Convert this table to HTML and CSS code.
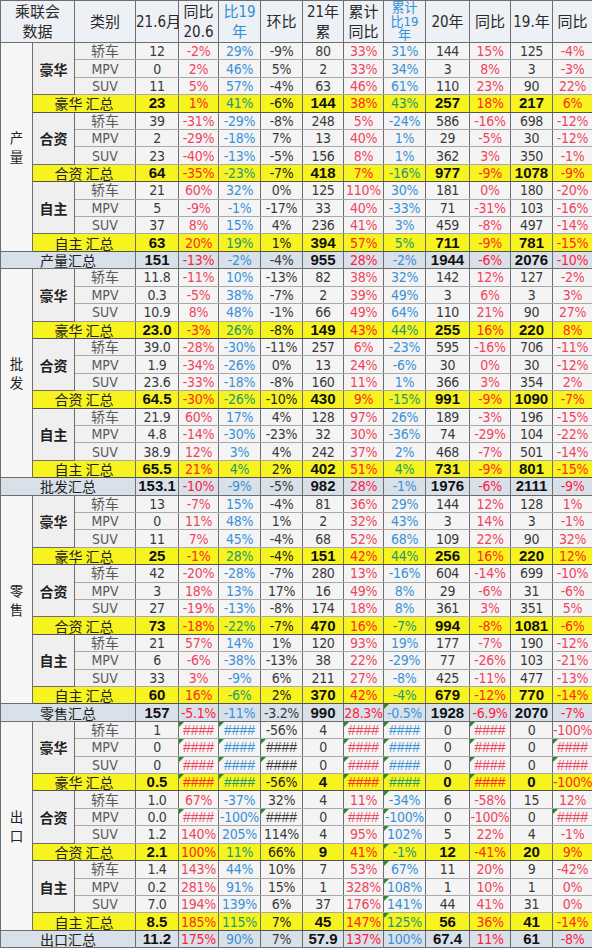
FILE: index.html
```html
<!DOCTYPE html>
<html lang="zh">
<head>
<meta charset="utf-8">
<title>乘联会数据</title>
<link rel="stylesheet" href="styles.css">
</head>
<body>
<table class="sheet">
<colgroup>
<col class="c-a"><col class="c-b"><col class="c-c"><col class="c-d"><col class="c-e"><col class="c-f"><col class="c-g"><col class="c-h"><col class="c-i"><col class="c-j"><col class="c-k"><col class="c-l"><col class="c-m"><col class="c-n">
</colgroup>
<thead>
<tr class="hd">
<th colspan="2">乘联会<br>数据</th><th>类别</th><th>21.6月</th><th>同比<br>20.6</th><th class="hb">比19<br>年</th><th>环比</th><th>21年<br>累</th><th>累计<br>同比</th><th class="hb"><div class="three">累计<br>比19<br>年</div></th><th>20年</th><th>同比</th><th>19.年</th><th>同比</th>
</tr>
</thead>
<tbody>
<!-- 产量 -->
<tr><td class="sec" rowspan="12">产<br>量</td><td class="sub" rowspan="3">豪华</td><td class="typ">轿车</td><td>12</td><td>-2%</td><td>29%</td><td>-9%</td><td>80</td><td>33%</td><td>31%</td><td>144</td><td>15%</td><td>125</td><td>-4%</td></tr>
<tr><td class="typ">MPV</td><td>0</td><td>2%</td><td>46%</td><td>5%</td><td>2</td><td>33%</td><td>34%</td><td>3</td><td>8%</td><td>3</td><td>-3%</td></tr>
<tr><td class="typ">SUV</td><td>11</td><td>5%</td><td>57%</td><td>-4%</td><td>63</td><td>46%</td><td>61%</td><td>110</td><td>23%</td><td>90</td><td>22%</td></tr>
<tr class="st"><td class="lbl" colspan="2">豪华 汇总</td><td>23</td><td>1%</td><td>41%</td><td>-6%</td><td>144</td><td>38%</td><td>43%</td><td>257</td><td>18%</td><td>217</td><td>6%</td></tr>
<tr><td class="sub" rowspan="3">合资</td><td class="typ">轿车</td><td>39</td><td>-31%</td><td>-29%</td><td>-8%</td><td>248</td><td>5%</td><td>-24%</td><td>586</td><td>-16%</td><td>698</td><td>-12%</td></tr>
<tr><td class="typ">MPV</td><td>2</td><td>-29%</td><td>-18%</td><td>7%</td><td>13</td><td>40%</td><td>1%</td><td>29</td><td>-5%</td><td>30</td><td>-12%</td></tr>
<tr><td class="typ">SUV</td><td>23</td><td>-40%</td><td>-13%</td><td>-5%</td><td>156</td><td>8%</td><td>1%</td><td>362</td><td>3%</td><td>350</td><td>-1%</td></tr>
<tr class="st"><td class="lbl" colspan="2">合资 汇总</td><td>64</td><td>-35%</td><td>-23%</td><td>-7%</td><td>418</td><td>7%</td><td>-16%</td><td>977</td><td>-9%</td><td>1078</td><td>-9%</td></tr>
<tr><td class="sub" rowspan="3">自主</td><td class="typ">轿车</td><td>21</td><td>60%</td><td>32%</td><td>0%</td><td>125</td><td>110%</td><td>30%</td><td>181</td><td>0%</td><td>180</td><td>-20%</td></tr>
<tr><td class="typ">MPV</td><td>5</td><td>-9%</td><td>-1%</td><td>-17%</td><td>33</td><td>40%</td><td>-33%</td><td>71</td><td>-31%</td><td>103</td><td>-16%</td></tr>
<tr><td class="typ">SUV</td><td>37</td><td>8%</td><td>15%</td><td>4%</td><td>236</td><td>41%</td><td>3%</td><td>459</td><td>-8%</td><td>497</td><td>-14%</td></tr>
<tr class="st"><td class="lbl" colspan="2">自主 汇总</td><td>63</td><td>20%</td><td>19%</td><td>1%</td><td>394</td><td>57%</td><td>5%</td><td>711</td><td>-9%</td><td>781</td><td>-15%</td></tr>
<tr class="tot"><td class="lbl" colspan="3">产量汇总</td><td>151</td><td>-13%</td><td>-2%</td><td>-4%</td><td>955</td><td>28%</td><td>-2%</td><td>1944</td><td>-6%</td><td>2076</td><td>-10%</td></tr>
<!-- 批发 -->
<tr><td class="sec" rowspan="12">批<br>发</td><td class="sub" rowspan="3">豪华</td><td class="typ">轿车</td><td>11.8</td><td>-11%</td><td>10%</td><td>-13%</td><td>82</td><td>38%</td><td>32%</td><td>142</td><td>12%</td><td>127</td><td>-2%</td></tr>
<tr><td class="typ">MPV</td><td>0.3</td><td>-5%</td><td>38%</td><td>-7%</td><td>2</td><td>39%</td><td>49%</td><td>3</td><td>6%</td><td>3</td><td>3%</td></tr>
<tr><td class="typ">SUV</td><td>10.9</td><td>8%</td><td>48%</td><td>-1%</td><td>66</td><td>49%</td><td>64%</td><td>110</td><td>21%</td><td>90</td><td>27%</td></tr>
<tr class="st"><td class="lbl" colspan="2">豪华 汇总</td><td>23.0</td><td>-3%</td><td>26%</td><td>-8%</td><td>149</td><td>43%</td><td>44%</td><td>255</td><td>16%</td><td>220</td><td>8%</td></tr>
<tr><td class="sub" rowspan="3">合资</td><td class="typ">轿车</td><td>39.0</td><td>-28%</td><td>-30%</td><td>-11%</td><td>257</td><td>6%</td><td>-23%</td><td>595</td><td>-16%</td><td>706</td><td>-11%</td></tr>
<tr><td class="typ">MPV</td><td>1.9</td><td>-34%</td><td>-26%</td><td>0%</td><td>13</td><td>24%</td><td>-6%</td><td>30</td><td>0%</td><td>30</td><td>-12%</td></tr>
<tr><td class="typ">SUV</td><td>23.6</td><td>-33%</td><td>-18%</td><td>-8%</td><td>160</td><td>11%</td><td>1%</td><td>366</td><td>3%</td><td>354</td><td>2%</td></tr>
<tr class="st"><td class="lbl" colspan="2">合资 汇总</td><td>64.5</td><td>-30%</td><td>-26%</td><td>-10%</td><td>430</td><td>9%</td><td>-15%</td><td>991</td><td>-9%</td><td>1090</td><td>-7%</td></tr>
<tr><td class="sub" rowspan="3">自主</td><td class="typ">轿车</td><td>21.9</td><td>60%</td><td>17%</td><td>4%</td><td>128</td><td>97%</td><td>26%</td><td>189</td><td>-3%</td><td>196</td><td>-15%</td></tr>
<tr><td class="typ">MPV</td><td>4.8</td><td>-14%</td><td>-30%</td><td>-23%</td><td>32</td><td>30%</td><td>-36%</td><td>74</td><td>-29%</td><td>104</td><td>-22%</td></tr>
<tr><td class="typ">SUV</td><td>38.9</td><td>12%</td><td>3%</td><td>4%</td><td>242</td><td>37%</td><td>2%</td><td>468</td><td>-7%</td><td>501</td><td>-14%</td></tr>
<tr class="st"><td class="lbl" colspan="2">自主 汇总</td><td>65.5</td><td>21%</td><td>4%</td><td>2%</td><td>402</td><td>51%</td><td>4%</td><td>731</td><td>-9%</td><td>801</td><td>-15%</td></tr>
<tr class="tot"><td class="lbl" colspan="3">批发汇总</td><td>153.1</td><td>-10%</td><td>-9%</td><td>-5%</td><td>982</td><td>28%</td><td>-1%</td><td>1976</td><td>-6%</td><td>2111</td><td>-9%</td></tr>
<!-- 零售 -->
<tr><td class="sec" rowspan="12">零<br>售</td><td class="sub" rowspan="3">豪华</td><td class="typ">轿车</td><td>13</td><td>-7%</td><td>15%</td><td>-4%</td><td>81</td><td>36%</td><td>29%</td><td>144</td><td>12%</td><td>128</td><td>1%</td></tr>
<tr><td class="typ">MPV</td><td>0</td><td>11%</td><td>48%</td><td>1%</td><td>2</td><td>32%</td><td>43%</td><td>3</td><td>14%</td><td>3</td><td>-1%</td></tr>
<tr><td class="typ">SUV</td><td>11</td><td>7%</td><td>45%</td><td>-4%</td><td>68</td><td>52%</td><td>68%</td><td>109</td><td>22%</td><td>90</td><td>32%</td></tr>
<tr class="st"><td class="lbl" colspan="2">豪华 汇总</td><td>25</td><td>-1%</td><td>28%</td><td>-4%</td><td>151</td><td>42%</td><td>44%</td><td>256</td><td>16%</td><td>220</td><td>12%</td></tr>
<tr><td class="sub" rowspan="3">合资</td><td class="typ">轿车</td><td>42</td><td>-20%</td><td>-28%</td><td>-7%</td><td>280</td><td>13%</td><td>-16%</td><td>604</td><td>-14%</td><td>699</td><td>-10%</td></tr>
<tr><td class="typ">MPV</td><td>3</td><td>18%</td><td>13%</td><td>17%</td><td>16</td><td>49%</td><td>8%</td><td>29</td><td>-6%</td><td>31</td><td>-6%</td></tr>
<tr><td class="typ">SUV</td><td>27</td><td>-19%</td><td>-13%</td><td>-8%</td><td>174</td><td>18%</td><td>8%</td><td>361</td><td>3%</td><td>351</td><td>5%</td></tr>
<tr class="st"><td class="lbl" colspan="2">合资 汇总</td><td>73</td><td>-18%</td><td>-22%</td><td>-7%</td><td>470</td><td>16%</td><td>-7%</td><td>994</td><td>-8%</td><td>1081</td><td>-6%</td></tr>
<tr><td class="sub" rowspan="3">自主</td><td class="typ">轿车</td><td>21</td><td>57%</td><td>14%</td><td>1%</td><td>120</td><td>93%</td><td>19%</td><td>177</td><td>-7%</td><td>190</td><td>-12%</td></tr>
<tr><td class="typ">MPV</td><td>6</td><td>-6%</td><td>-38%</td><td>-13%</td><td>38</td><td>22%</td><td>-29%</td><td>77</td><td>-26%</td><td>103</td><td>-21%</td></tr>
<tr><td class="typ">SUV</td><td>33</td><td>3%</td><td>-9%</td><td>6%</td><td>211</td><td>27%</td><td>-8%</td><td>425</td><td>-11%</td><td>477</td><td>-13%</td></tr>
<tr class="st"><td class="lbl" colspan="2">自主 汇总</td><td>60</td><td>16%</td><td>-6%</td><td>2%</td><td>370</td><td>42%</td><td>-4%</td><td>679</td><td>-12%</td><td>770</td><td>-14%</td></tr>
<tr class="tot"><td class="lbl" colspan="3">零售汇总</td><td>157</td><td>-5.1%</td><td>-11%</td><td>-3.2%</td><td>990</td><td>28.3%</td><td class="g">-0.5%</td><td>1928</td><td>-6.9%</td><td>2070</td><td>-7%</td></tr>
<!-- 出口 -->
<tr><td class="sec" rowspan="12">出<br>口</td><td class="sub" rowspan="3">豪华</td><td class="typ">轿车</td><td>1</td><td class="g h">####</td><td class="g h">####</td><td>-56%</td><td>4</td><td class="g h">####</td><td class="g h">####</td><td>0</td><td class="g h">####</td><td>0</td><td>-100%</td></tr>
<tr><td class="typ">MPV</td><td>0</td><td class="g h">####</td><td class="g h">####</td><td class="g h">####</td><td>0</td><td class="g h">####</td><td class="g h">####</td><td>0</td><td class="g h">####</td><td>0</td><td class="g h">####</td></tr>
<tr><td class="typ">SUV</td><td>0</td><td class="g h">####</td><td class="g h">####</td><td class="g h">####</td><td>0</td><td class="g h">####</td><td class="g h">####</td><td>0</td><td class="g h">####</td><td>0</td><td class="g h">####</td></tr>
<tr class="st"><td class="lbl" colspan="2">豪华 汇总</td><td>0.5</td><td class="g h">####</td><td class="g h">####</td><td>-56%</td><td>4</td><td class="g h">####</td><td class="g h">####</td><td>0</td><td class="g h">####</td><td>0</td><td>-100%</td></tr>
<tr><td class="sub" rowspan="3">合资</td><td class="typ">轿车</td><td>1.0</td><td>67%</td><td>-37%</td><td>32%</td><td>4</td><td>11%</td><td class="g">-34%</td><td>6</td><td>-58%</td><td>15</td><td>12%</td></tr>
<tr><td class="typ">MPV</td><td>0.0</td><td class="g h">####</td><td>-100%</td><td class="g h">####</td><td>0</td><td class="g h">####</td><td class="g">-100%</td><td>0</td><td>-100%</td><td>0</td><td class="g h">####</td></tr>
<tr><td class="typ">SUV</td><td>1.2</td><td>140%</td><td>205%</td><td>114%</td><td>4</td><td>95%</td><td class="g">102%</td><td>5</td><td>22%</td><td>4</td><td>-1%</td></tr>
<tr class="st"><td class="lbl" colspan="2">合资 汇总</td><td>2.1</td><td>100%</td><td>11%</td><td>66%</td><td>9</td><td>41%</td><td class="g">-1%</td><td>12</td><td>-41%</td><td>20</td><td>9%</td></tr>
<tr><td class="sub" rowspan="3">自主</td><td class="typ">轿车</td><td>1.4</td><td>143%</td><td>44%</td><td>10%</td><td>7</td><td>53%</td><td class="g">67%</td><td>11</td><td>20%</td><td>9</td><td>-42%</td></tr>
<tr><td class="typ">MPV</td><td>0.2</td><td>281%</td><td>91%</td><td>15%</td><td>1</td><td>328%</td><td class="g">108%</td><td>1</td><td>10%</td><td>1</td><td>0%</td></tr>
<tr><td class="typ">SUV</td><td>7.0</td><td>194%</td><td>139%</td><td>6%</td><td>37</td><td>176%</td><td class="g">141%</td><td>44</td><td>41%</td><td>31</td><td>0%</td></tr>
<tr class="st"><td class="lbl" colspan="2">自主 汇总</td><td>8.5</td><td>185%</td><td>115%</td><td>7%</td><td>45</td><td>147%</td><td class="g">125%</td><td>56</td><td>36%</td><td>41</td><td>-14%</td></tr>
<tr class="tot"><td class="lbl" colspan="3">出口汇总</td><td>11.2</td><td>175%</td><td>90%</td><td>7%</td><td>57.9</td><td>137%</td><td>100%</td><td>67.4</td><td>11%</td><td>61</td><td>-8%</td></tr>
</tbody>
</table>
</body>
</html>
```
FILE: styles.css
```css
html, body {
  margin: 0;
  padding: 0;
  background: #ffffff;
}

.sheet {
  border-collapse: collapse;
  table-layout: fixed;
  width: 592px;
  font-family: "Liberation Sans Narrow", "DejaVu Sans Condensed", "Noto Sans CJK SC", sans-serif;
  font-size: 14px;
  letter-spacing: -0.3px;
  color: #3a3a3a;
}

.c-a { width: 32px; }
.c-b { width: 42px; }
.c-c { width: 61px; }
.c-d { width: 43px; }
.c-e { width: 40px; }
.c-f { width: 42px; }
.c-g { width: 42px; }
.c-h { width: 41px; }
.c-i { width: 40px; }
.c-j { width: 42px; }
.c-k { width: 44px; }
.c-l { width: 41px; }
.c-m { width: 42px; }
.c-n { width: 40px; }

.sheet th,
.sheet td {
  border: 1px solid #6e6e6e;
  padding: 0;
  text-align: center;
  vertical-align: middle;
  white-space: nowrap;
  overflow: visible;
}

.sheet td {
  height: 16.42px;
  line-height: 16px;
  background: #f4f4f4;
}

.hd th {
  height: 41px;
  background: #edf0f4;
  font-weight: normal;
  color: #2a2a2a;
  line-height: 20px;
  font-size: 15px;
  letter-spacing: 0;
}

.hd th.hb { color: #2f8fd8; }

.three {
  height: 41px;
  line-height: 13.6px;
  font-size: 13px;
}

/* column colours: data cells are always the last eleven */
.sheet tbody td:nth-last-child(10),
.sheet tbody td:nth-last-child(6),
.sheet tbody td:nth-last-child(3),
.sheet tbody td:nth-last-child(1) { color: #ee4560; }

.sheet tbody td:nth-last-child(9),
.sheet tbody td:nth-last-child(5) { color: #3a92d6; }

.sheet tbody td.sec {
  background: #f6f6f6;
  color: #222;
  font-family: "Noto Sans CJK SC", sans-serif;
  font-size: 13.5px;
  line-height: 19px;
  letter-spacing: 0;
}

.sheet tbody td.sub {
  background: #efefef;
  color: #222;
  font-family: "Noto Sans CJK SC", sans-serif;
  font-weight: bold;
  font-size: 14px;
  letter-spacing: 0;
}

.sheet tbody td.typ {
  color: #5a5a5a;
  background: #f1f1f1;
  font-size: 14px;
  letter-spacing: 0;
}

.sheet tbody tr:not(.st):not(.tot) td:not(.sec):not(.sub) {
  border-top-color: #a9a9a9;
  border-bottom-color: #a9a9a9;
}

/* subtotal rows */
.sheet tbody .st td {
  background: #f7f31e;
  border-top: 1px solid #555;
  border-bottom: 1px solid #555;
}
.sheet tbody .st td.lbl,
.sheet tbody .tot td.lbl {
  color: #222;
  font-family: "Noto Sans CJK SC", sans-serif;
  font-size: 14px;
  letter-spacing: 0;
}
.sheet tbody .st td:nth-last-child(11),
.sheet tbody .st td:nth-last-child(7),
.sheet tbody .st td:nth-last-child(4),
.sheet tbody .st td:nth-last-child(2) {
  color: #111;
  font-family: "Liberation Sans", "Noto Sans CJK SC", sans-serif;
  font-weight: bold;
  font-size: 15px;
  letter-spacing: 0;
}
.sheet tbody .st td:nth-last-child(8) { color: #222; }
.sheet tbody .st td:nth-last-child(10),
.sheet tbody .st td:nth-last-child(6),
.sheet tbody .st td:nth-last-child(3),
.sheet tbody .st td:nth-last-child(1) { color: #ff2a1a; }
.sheet tbody .st td:nth-last-child(9),
.sheet tbody .st td:nth-last-child(5) { color: #1f9a70; }

/* section totals */
.sheet tbody .tot td { background: #d8e0ea; }
.sheet tbody .tot td:nth-last-child(11),
.sheet tbody .tot td:nth-last-child(7),
.sheet tbody .tot td:nth-last-child(4),
.sheet tbody .tot td:nth-last-child(2) {
  color: #111;
  font-family: "Liberation Sans", "Noto Sans CJK SC", sans-serif;
  font-weight: bold;
  font-size: 15px;
  letter-spacing: 0;
}
.sheet tbody .tot td:nth-last-child(10),
.sheet tbody .tot td:nth-last-child(6),
.sheet tbody .tot td:nth-last-child(3),
.sheet tbody .tot td:nth-last-child(1) { color: #ff2040; }

/* #### overflow cells */
.sheet td.h {
  font-family: "Liberation Sans", sans-serif;
  font-size: 14px;
  letter-spacing: 0;
}

/* excel error-indicator triangles */
.sheet td.g { position: relative; }
.sheet td.g::before {
  content: "";
  position: absolute;
  left: 0;
  top: 0;
  border-top: 5px solid #2a8a2a;
  border-right: 5px solid transparent;
}
```
